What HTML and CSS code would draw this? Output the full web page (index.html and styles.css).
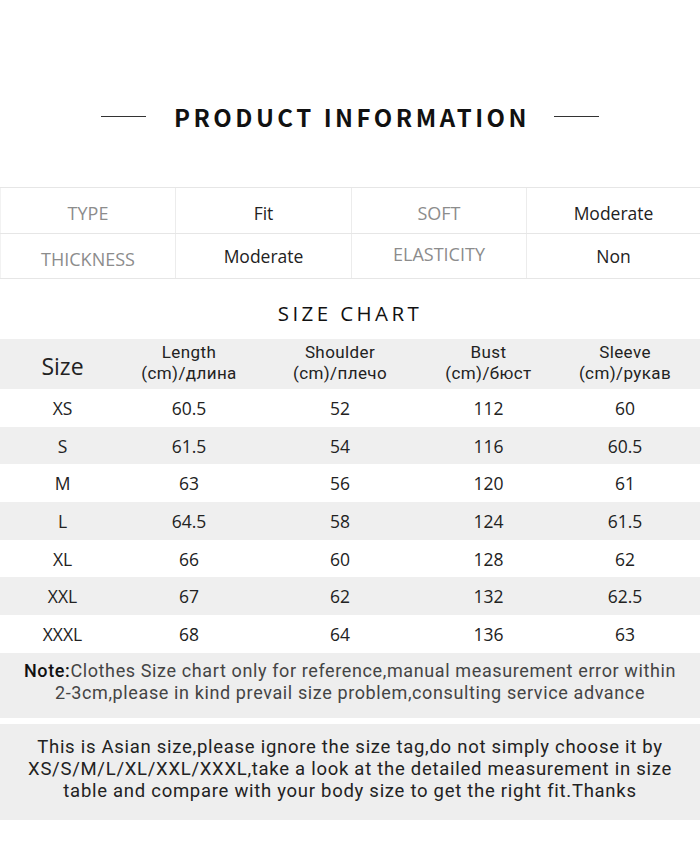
FILE: index.html
```html
<!DOCTYPE html>
<html>
<head>
<meta charset="utf-8">
<link rel="stylesheet" href="styles.css">
</head>
<body>
<div class="page">
  <header class="hero">
    <span class="rule"></span>
    <h1 class="title">PRODUCT INFORMATION</h1>
    <span class="rule"></span>
  </header>

  <div class="info">
    <div class="info-row first">
      <div class="cell label">TYPE</div>
      <div class="cell value">Fit</div>
      <div class="cell label">SOFT</div>
      <div class="cell value">Moderate</div>
    </div>
    <div class="info-row">
      <div class="cell label low">THICKNESS</div>
      <div class="cell value">Moderate</div>
      <div class="cell label high">ELASTICITY</div>
      <div class="cell value">Non</div>
    </div>
  </div>

  <h2 class="chart-title">SIZE CHART</h2>

  <div class="chart">
    <div class="row head">
      <div class="c size-head">Size</div>
      <div class="c two">Length<br>(cm)/длина</div>
      <div class="c two">Shoulder<br>(cm)/плечо</div>
      <div class="c two">Bust<br>(cm)/бюст</div>
      <div class="c two">Sleeve<br>(cm)/рукав</div>
    </div>
    <div class="row"><div class="c">XS</div><div class="c">60.5</div><div class="c">52</div><div class="c">112</div><div class="c">60</div></div>
    <div class="row alt"><div class="c">S</div><div class="c">61.5</div><div class="c">54</div><div class="c">116</div><div class="c">60.5</div></div>
    <div class="row"><div class="c">M</div><div class="c">63</div><div class="c">56</div><div class="c">120</div><div class="c">61</div></div>
    <div class="row alt"><div class="c">L</div><div class="c">64.5</div><div class="c">58</div><div class="c">124</div><div class="c">61.5</div></div>
    <div class="row"><div class="c">XL</div><div class="c">66</div><div class="c">60</div><div class="c">128</div><div class="c">62</div></div>
    <div class="row alt"><div class="c">XXL</div><div class="c">67</div><div class="c">62</div><div class="c">132</div><div class="c">62.5</div></div>
    <div class="row"><div class="c">XXXL</div><div class="c">68</div><div class="c">64</div><div class="c">136</div><div class="c">63</div></div>
  </div>

  <p class="note"><b>Note:</b>Clothes Size chart only for reference,manual measurement error within<br>2-3cm,please in kind prevail size problem,consulting service advance</p>

  <p class="asian">This is Asian size,please ignore the size tag,do not simply choose it by<br>XS/S/M/L/XL/XXL/XXXL,take a look at the detailed measurement in size<br>table and compare with your body size to get the right fit.Thanks</p>
</div>
</body>
</html>
```

FILE: styles.css
```css
* { box-sizing: border-box; }
html, body { margin: 0; padding: 0; background: #fff; }
body {
  font-family: "Open Sans", "Noto Sans", sans-serif;
  color: #222;
  width: 700px;
}
.page { width: 700px; }

.hero {
  height: 187px;
  padding-top: 46px;
  display: flex;
  align-items: center;
  justify-content: center;
}
.rule {
  display: block;
  width: 45px;
  height: 1px;
  background: #333;
}
.title {
  margin: 0 24px 0 25px;
  font-family: "Noto Sans CJK SC", "Noto Sans", sans-serif;
  font-weight: 700;
  font-size: 24px;
  letter-spacing: 3.5px;
  color: #111;
  line-height: 30px;
  padding-left: 3px;
}

.info {
  border-top: 1px solid #e6e6e6;
}
.info-row {
  display: grid;
  grid-template-columns: 175px 176px 175px 174px;
  height: 45.5px;
  border-bottom: 1px solid #e6e6e6;
}
.cell {
  display: flex;
  align-items: center;
  justify-content: center;
  font-size: 17.5px;
  border-left: 1px solid #ececec;
}
.first .cell { padding-top: 5px; }
.cell:first-child { border-left: 1px solid #f2f2f2; }
.label { color: #8c8c8c; font-size: 18px; }
.value { color: #222; }
.low { padding-top: 6px; }
.high { padding-bottom: 3px; }

.chart-title {
  margin: 0;
  height: 60px;
  padding-top: 8px;
  display: flex;
  align-items: center;
  justify-content: center;
  font-weight: 400;
  font-size: 20.5px;
  letter-spacing: 3.4px;
  color: #111;
}

.row {
  display: grid;
  grid-template-columns: 125px 128px 174px 123px 150px;
  height: 37.7px;
  align-items: center;
  text-align: center;
  font-size: 17.5px;
  color: #222;
}
.row.alt, .row.head { background: #efefef; }
.row.head {
  height: 50px;
}
.c.two {
  font-family: Roboto, "Open Sans", sans-serif;
  font-size: 17px;
  line-height: 21px;
  letter-spacing: 0.4px;
  padding-bottom: 2px;
}
.size-head { font-size: 23px; padding-top: 3px; }

.note {
  margin: 0;
  height: 65px;
  background: #eeeeee;
  font-family: Roboto, "Open Sans", sans-serif;
  font-size: 18px;
  line-height: 22px;
  letter-spacing: 0.62px;
  color: #444;
  text-align: center;
  padding: 7px 0 0;
  white-space: nowrap;
}
.note b { font-weight: 500; color: #111; }

.asian {
  margin: 6px 0 0;
  height: 96px;
  background: #eeeeee;
  font-family: Roboto, "Open Sans", sans-serif;
  font-size: 18.5px;
  line-height: 22px;
  letter-spacing: 0.72px;
  color: #222;
  text-align: center;
  padding: 12px 0 0;
  white-space: nowrap;
}
```
